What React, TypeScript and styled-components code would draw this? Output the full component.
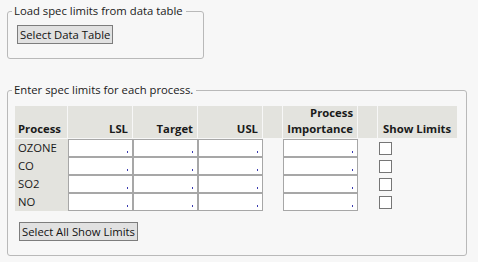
import { Fragment } from 'react'
import styled, { createGlobalStyle } from 'styled-components'

const GlobalStyle = createGlobalStyle`
    html, body {
        margin: 0;
        padding: 0;
        background: #f7f7f7;
    }
    body {
        font-family: 'Open Sans', 'Noto Sans', sans-serif;
        font-size: 11.3px;
        color: #1a1a1a;
    }
`

const Page = styled.div`
    display: flex;
    flex-direction: column;
    align-items: flex-start;
    gap: 23px;
    padding: 3px 0 0 7px;
    width: 478px;
    height: 262px;
    box-sizing: border-box;
`

interface GroupProps {
    width: number
}

const Group = styled.fieldset<GroupProps>`
    margin: 0;
    width: ${(props) => props.width}px;
    box-sizing: border-box;
    border: 1px solid #b9b9b9;
    border-radius: 3px;
    padding: 0 6px 14px 7px;
    display: flex;
    flex-direction: column;
    align-items: flex-start;
`

const Legend = styled.legend`
    margin-left: -3px;
    padding: 0 3px 0 2px;
    line-height: 16px;
    height: 16px;
    white-space: nowrap;
`

interface ButtonProps {
    top: number
    left: number
}

const Button = styled.button<ButtonProps>`
    margin: ${(props) => props.top}px 0 0 ${(props) => props.left}px;
    font-family: inherit;
    font-size: 11.3px;
    color: #111;
    background: #e1e1e1;
    border: 1px solid #7d7d7d;
    border-radius: 0;
    height: 19px;
    padding: 0 2px;
    line-height: 17px;
    white-space: nowrap;
`

const Table = styled.div`
    margin-top: 8px;
    display: grid;
    grid-template-columns: 53px 65px 65px 65px 20px 75px 20px 79px;
    grid-template-rows: 33px repeat(4, 18px);
`

interface HeadProps {
    align?: 'left' | 'right'
}

const HeadCell = styled.div<HeadProps>`
    box-sizing: border-box;
    background: #e3e3de;
    border-right: 1px solid #f7f7f7;
    border-bottom: 1px solid #f7f7f7;
    display: flex;
    flex-direction: column;
    justify-content: flex-end;
    align-items: ${(props) => (props.align === 'left' ? 'flex-start' : 'flex-end')};
    padding: 0 4px 1px 3px;
    font-weight: bold;
    line-height: 16px;
    white-space: nowrap;
    &:nth-child(8) {
        border-right: none;
        padding-left: 5px;
    }
`

const NameCell = styled.div`
    background: #e3e3de;
    padding-left: 3px;
    line-height: 17px;
`

const Field = styled.div`
    box-sizing: border-box;
    border: 1px solid #a7a7a7;
    background: #fff;
    display: flex;
    justify-content: flex-end;
    align-items: flex-end;
    padding: 0 4px 1px 0;
`

const Dot = styled.span`
    width: 1px;
    height: 2px;
    background: #3a3ab0;
    margin-bottom: 2px;
`

const Spacer = styled.div``

const CheckCell = styled.div`
    display: flex;
    align-items: center;
    padding-left: 1px;
`

const Checkbox = styled.div`
    width: 13px;
    height: 13px;
    box-sizing: border-box;
    border: 1px solid #767676;
    background: #fff;
`

const processes = ['OZONE', 'CO', 'SO2', 'NO']

const InputField = () => (
    <Field>
        <Dot />
    </Field>
)

const App = () => {
    return (
        <>
            <GlobalStyle />
            <Page>
                <Group width={197}>
                    <Legend>Load spec limits from data table</Legend>
                    <Button top={6} left={2}>
                        Select Data Table
                    </Button>
                </Group>
                <Group width={460}>
                    <Legend>Enter spec limits for each process.</Legend>
                    <Table>
                        <HeadCell align="left">Process</HeadCell>
                        <HeadCell>LSL</HeadCell>
                        <HeadCell>Target</HeadCell>
                        <HeadCell>USL</HeadCell>
                        <HeadCell />
                        <HeadCell>
                            <span>Process</span>
                            <span>Importance</span>
                        </HeadCell>
                        <HeadCell />
                        <HeadCell align="left">Show Limits</HeadCell>
                        {processes.map((p) => (
                            <Fragment key={p}>
                                <NameCell>{p}</NameCell>
                                <InputField />
                                <InputField />
                                <InputField />
                                <Spacer />
                                <InputField />
                                <Spacer />
                                <CheckCell>
                                    <Checkbox />
                                </CheckCell>
                            </Fragment>
                        ))}
                    </Table>
                    <Button top={11} left={4}>
                        Select All Show Limits
                    </Button>
                </Group>
            </Page>
        </>
    )
}

export default App
